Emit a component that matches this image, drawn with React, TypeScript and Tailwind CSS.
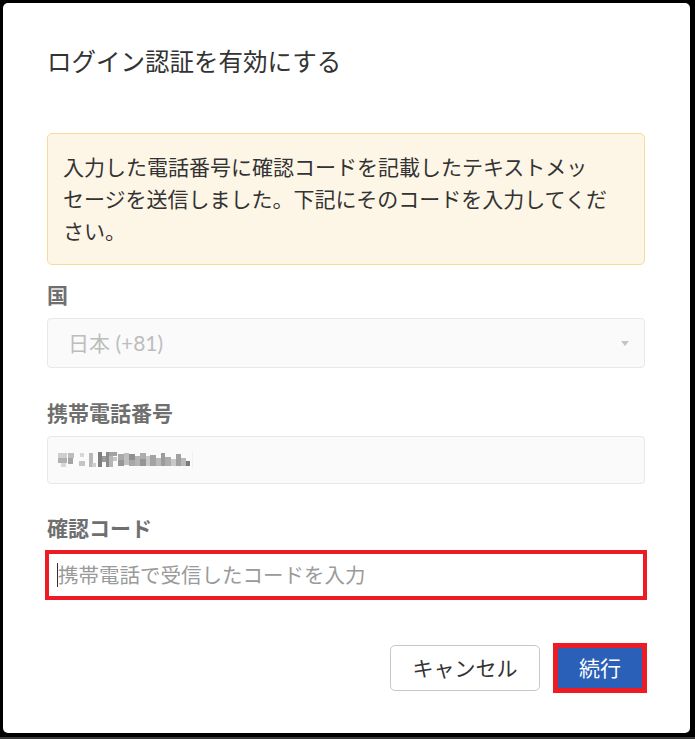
const jp = 'font-["Lato","Noto_Sans_CJK_JP",sans-serif]';

// pixelated (mosaic) phone number, as in the screenshot
const mosaic: [number, number, number, number, string][] = [
  [0, 2, 9, 5, '#cfcfcf'], [0, 7, 9, 5, '#b0b0b0'], [3, 12, 5, 4, '#d8d8d8'],
  [10, 2, 6, 5, '#bdbdbd'], [10, 7, 5, 6, '#a4a4a4'],
  [21, 10, 6, 5, '#c4c4c4'], [22, 2, 4, 4, '#d6d6d6'],
  [31, 2, 4, 14, '#b9b9b9'], [34, 12, 4, 4, '#cfcfcf'],
  [40, 1, 4, 15, '#7e7e7e'], [44, 5, 4, 6, '#9a9a9a'], [48, 1, 3, 15, '#8a8a8a'],
  [51, 1, 8, 4, '#a2a2a2'], [51, 5, 4, 11, '#b6b6b6'], [55, 6, 4, 4, '#c6c6c6'],
  [60, 3, 6, 6, '#a9a9a9'], [60, 9, 6, 6, '#979797'], [66, 2, 5, 12, '#bfbfbf'],
  [71, 3, 6, 6, '#8f8f8f'], [71, 9, 6, 6, '#a7a7a7'], [77, 5, 5, 10, '#b4b4b4'],
  [82, 2, 6, 6, '#adadad'], [82, 8, 6, 7, '#959595'], [88, 5, 4, 10, '#c7c7c7'],
  [92, 4, 6, 11, '#a3a3a3'], [98, 7, 5, 8, '#bababa'], [103, 2, 4, 13, '#9b9b9b'],
  [107, 6, 6, 9, '#acacac'], [113, 8, 5, 7, '#c9c9c9'], [118, 3, 5, 12, '#a0a0a0'],
  [123, 7, 5, 8, '#b8b8b8'], [128, 10, 4, 5, '#7a7a7a'],
];

export default function App() {
  return (
    <div className={`w-[695px] h-[739px] bg-black overflow-hidden ${jp}`}>
      <div className="flex pt-[3px] pl-[3px]">
        <div className="w-[687px] h-[730px] bg-white rounded-[5px] pt-[42px] pl-[44px] pr-[45px]">
          <h1 className="text-[24.5px] leading-[34px] text-[#333] font-normal">
            ログイン認証を有効にする
          </h1>

          <div className="mt-[54px] border border-[#f6dc96] bg-[#fdf6e7] rounded-[5px] px-[15px] py-[17px] text-[21px] leading-[32px] text-[#333]">
            入力した電話番号に確認コードを記載したテキストメッ
            <br />
            セージを送信しました。下記にそのコードを入力してくだ
            <br />
            さい。
          </div>

          <label className="block mt-[13px] text-[21px] leading-[34px] font-bold text-[#6f6f6f]">国</label>
          <div className="mt-[6px] h-[50px] flex items-center justify-between border border-[#e8e8e8] bg-[#fafafa] rounded-[4px] pl-[20px] pr-[15px]">
            <span className="text-[21px] text-[#bdbdbd]">日本 (+81)</span>
            <svg width="8" height="5" viewBox="0 0 8 5">
              <path d="M0 0H8L4 5Z" fill="#c4c4c4" />
            </svg>
          </div>

          <label className="block mt-[28px] text-[21px] leading-[34px] font-bold text-[#6f6f6f]">携帯電話番号</label>
          <div className="mt-[6px] h-[48px] flex items-center border border-[#e8e8e8] bg-[#fafafa] rounded-[4px] pl-[10px]">
            <svg width="142" height="18" viewBox="0 0 142 18">
              {mosaic.map(([x, y, w, h, c], i) => (
                <rect key={i} x={x} y={y} width={w} height={h} fill={c} />
              ))}
              <rect x="134" y="0" width="1" height="18" fill="#f0f0f0" />
            </svg>
          </div>

          <label className="block mt-[27px] text-[21px] leading-[34px] font-bold text-[#6f6f6f]">確認コード</label>
          <div className="mt-[5px] -mx-[2px] h-[50px] border-4 border-[#ed1c24] bg-white flex items-center pl-[8px]">
            <span className="w-px h-[24px] bg-[#333]" />
            <span className="text-[20.5px] text-[#9a9a9a]">携帯電話で受信したコードを入力</span>
          </div>

          <div className="mt-[43px] flex justify-end items-center gap-[13px] -mr-[2px]">
            <button className="w-[150px] h-[46px] border border-[#c8c8c8] rounded-[5px] bg-white text-[21px] text-[#333]">
              キャンセル
            </button>
            <div className="w-[94px] h-[50px] border-[5px] border-[#ed1c24] bg-[#2b60b8] flex items-center justify-center">
              <span className="text-[21px] text-white">続行</span>
            </div>
          </div>
        </div>
      </div>
      <div className="mt-[4px] h-[3px] bg-[#3a3a3a]" />
    </div>
  );
}
